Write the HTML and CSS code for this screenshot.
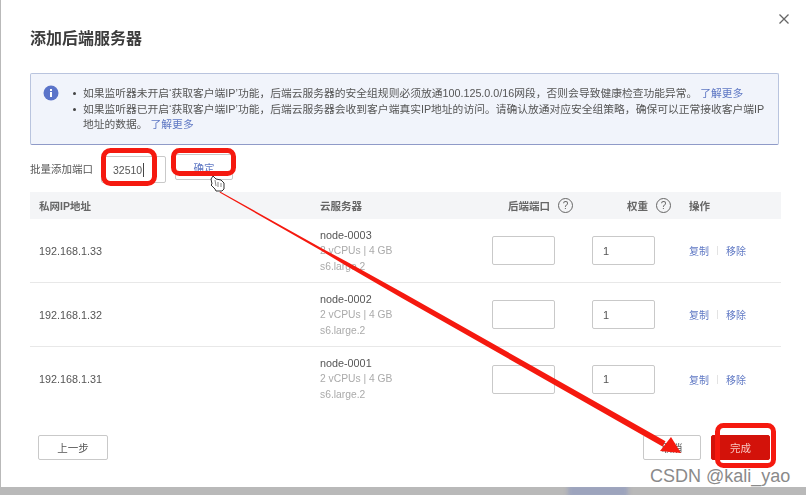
FILE: index.html
```html
<!DOCTYPE html>
<html lang="zh">
<head>
<meta charset="utf-8">
<title>添加后端服务器</title>
<link rel="stylesheet" href="styles.css">
</head>
<body>
<div class="stage">
  <div class="bg-blob"></div>
  <div class="dialog">
    <button class="close" aria-label="关闭"><svg width="12" height="12" viewBox="0 0 12 12"><path d="M1.5 1.5l9 9M10.5 1.5l-9 9" stroke="#666" stroke-width="1.3" fill="none"/></svg></button>
    <h1 class="title">添加后端服务器</h1>
    <div class="notice">
      <svg class="notice-icon" width="16" height="16" viewBox="0 0 16 16"><circle cx="8" cy="8" r="7.5" fill="#5b74c9"/><rect x="7" y="7" width="2" height="5" fill="#fff"/><rect x="7" y="4" width="2" height="2" fill="#fff"/></svg>
      <ul class="notice-list">
        <li>如果监听器未开启‘获取客户端IP’功能，后端云服务器的安全组规则必须放通100.125.0.0/16网段，否则会导致健康检查功能异常。 <a class="link">了解更多</a></li>
        <li>如果监听器已开启‘获取客户端IP’功能，后端云服务器会收到客户端真实IP地址的访问。请确认放通对应安全组策略，确保可以正常接收客户端IP地址的数据。 <a class="link">了解更多</a></li>
      </ul>
    </div>
    <div class="batch">
      <span class="batch-label">批量添加端口</span>
      <div class="input batch-input">32510<span class="caret"></span></div>
      <button class="btn batch-btn">确定</button>
    </div>
    <div class="grid head">
      <div>私网IP地址</div>
      <div>云服务器</div>
      <div class="head-port">后端端口<span class="help">?</span></div>
      <div class="head-weight">权重<span class="help">?</span></div>
      <div>操作</div>
    </div>
    <div class="grid row">
      <div class="ip">192.168.1.33</div>
      <div class="server"><div class="name">node-0003</div><div>2 vCPUs | 4 GB</div><div>s6.large.2</div></div>
      <div class="input cell"></div>
      <div class="input cell">1</div>
      <div class="ops"><a class="link">复制</a><i></i><a class="link">移除</a></div>
    </div>
    <div class="grid row">
      <div class="ip">192.168.1.32</div>
      <div class="server"><div class="name">node-0002</div><div>2 vCPUs | 4 GB</div><div>s6.large.2</div></div>
      <div class="input cell"></div>
      <div class="input cell">1</div>
      <div class="ops"><a class="link">复制</a><i></i><a class="link">移除</a></div>
    </div>
    <div class="grid row last">
      <div class="ip">192.168.1.31</div>
      <div class="server"><div class="name">node-0001</div><div>2 vCPUs | 4 GB</div><div>s6.large.2</div></div>
      <div class="input cell"></div>
      <div class="input cell">1</div>
      <div class="ops"><a class="link">复制</a><i></i><a class="link">移除</a></div>
    </div>
    <div class="footer">
      <button class="btn prev">上一步</button>
      <div class="footer-right">
        <button class="btn cancel">取消</button>
        <button class="btn done">完成</button>
      </div>
    </div>
  </div>
  <svg class="marks" width="806" height="495" viewBox="0 0 806 495">
    <rect x="103.5" y="150.5" width="51" height="33" rx="7" fill="none" stroke="#f5190f" stroke-width="5"/>
    <rect x="173.5" y="150.5" width="60" height="23" rx="6" fill="none" stroke="#f5190f" stroke-width="5"/>
    <rect x="717.5" y="425.5" width="56" height="40" rx="6" fill="none" stroke="#f5190f" stroke-width="5"/>
    <path d="M220 191.5L322.6 248.8L346 261.2L404.2 293.6L665.5 441.2L662.5 446.4L401.8 298L344 264.6L321.4 250.8L219.6 192.5Z" fill="#f5190f"/>
    <path d="M681 453L660 451L671 437Z" fill="#f5190f"/>
    <g class="hand">
      <path d="M211 179l1 5-1 1 4 4 1 2 6 0 2-2 0-6-3-3-5-1-3-3z" fill="#fff" stroke="#333" stroke-width="1"/>
      <path d="M215 180l1 6M218 182l0 5M221 183l0 4" stroke="#555" stroke-width=".7" fill="none"/>
    </g>
  </svg>
  <div class="watermark">CSDN @kali_yao</div>
</div>
</body>
</html>
```
FILE: styles.css
```css
* { box-sizing: border-box; }
html, body { margin: 0; padding: 0; }
body { width: 806px; height: 495px; overflow: hidden; background: #b9b9b9; font-family: "Liberation Sans", "Noto Sans CJK SC", sans-serif; color: #555; }
.stage { position: relative; width: 806px; height: 495px; padding-left: 1px; }
.bg-blob { position: absolute; left: 568px; top: 484px; width: 60px; height: 14px; background: #9da4bd; filter: blur(2px); }
.dialog { position: relative; width: 805px; height: 487px; background: #fff; padding: 27px 27px 0 29px; filter: blur(.35px); }
.close { position: absolute; top: 13px; right: 16px; width: 12px; height: 12px; padding: 0; border: 0; background: none; display: flex; }
.title { margin: 0 0 25px; font-family: "Noto Sans CJK SC", sans-serif; font-size: 16px; line-height: 21px; font-weight: 700; color: #3c3c3c; }
.notice { display: flex; width: 749px; height: 72px; padding: 11px 8px 0 12px; background: #f1f4fb; border: 1px solid #b9c4de; border-bottom-color: #8f9ac8; border-radius: 2px; }
.notice-icon { flex: none; margin-right: 24px; }
.notice-list { margin: 1px 0 0; padding: 0; list-style: none; font-size: 10.77px; line-height: 15.5px; color: #555; }
.notice-list li { position: relative; }
.notice-list li::before { content: ""; position: absolute; left: -10px; top: 6px; width: 3px; height: 3px; border-radius: 50%; background: #444; }
.link { color: #5f78c4; }
.batch { display: flex; align-items: center; height: 47px; font-size: 10.5px; }
.batch-label { width: 71px; color: #555; }
.input { display: flex; align-items: center; border: 1px solid #c9c9c9; border-radius: 2px; background: #fff; color: #555; font-size: 11px; }
.batch-input { width: 65px; height: 27px; padding-left: 11px; margin-top: 2px; font-size: 10.5px; }
.caret { width: 1px; height: 14px; margin-left: 1px; background: #444; }
.btn { border: 1px solid #c9c9c9; border-radius: 2px; background: #fff; font-family: "Noto Sans CJK SC", sans-serif; font-size: 10.5px; color: #555; padding: 0; }
.batch-btn { width: 58px; height: 26px; margin-left: 9px; color: #5f78c4; margin-top: -3px; }
.grid { display: grid; grid-template-columns: 281px 172px 100px 97px 1fr; align-items: center; padding-left: 9px; width: 751px; }
.head { height: 27px; background: #f4f5f7; font-size: 10.5px; font-weight: 700; color: #666; }
.head-port, .head-weight { display: flex; align-items: center; gap: 8px; }
.head-port { padding-left: 16px; }
.head-weight { padding-left: 35px; }
.help { display: inline-flex; align-items: center; justify-content: center; width: 15px; height: 15px; border: 1px solid #666; border-radius: 50%; font-size: 10px; font-weight: 400; line-height: 1; }
.row { height: 64px; border-bottom: 1px solid #e8e8e8; font-size: 11px; }
.row.last { border-bottom: 0; }
.ip { color: #555; font-size: 10.8px; }
.server { color: #aaa; font-size: 10.3px; line-height: 16px; }
.name { color: #555; font-size: 10.8px; }
.cell { width: 63px; height: 29px; padding-left: 10px; }
.ops { display: flex; align-items: center; font-size: 10px; }
.ops i { width: 1px; height: 9px; margin: 0 8px; background: #e3e3e3; }
.footer { display: flex; justify-content: space-between; width: 732px; margin: 24px 0 0 8px; }
.footer .btn { height: 25px; }
.footer-right { display: flex; gap: 10px; }
.prev { width: 70px; }
.cancel { width: 58px; }
.done { width: 59px; background: #d3120a; border-color: #d3120a; color: #f7c6c0; }
.marks { position: absolute; left: 0; top: 0; pointer-events: none; }
.watermark { position: absolute; left: 650px; top: 466px; font-size: 18px; line-height: 21px; color: #8a8a8a; }
```
